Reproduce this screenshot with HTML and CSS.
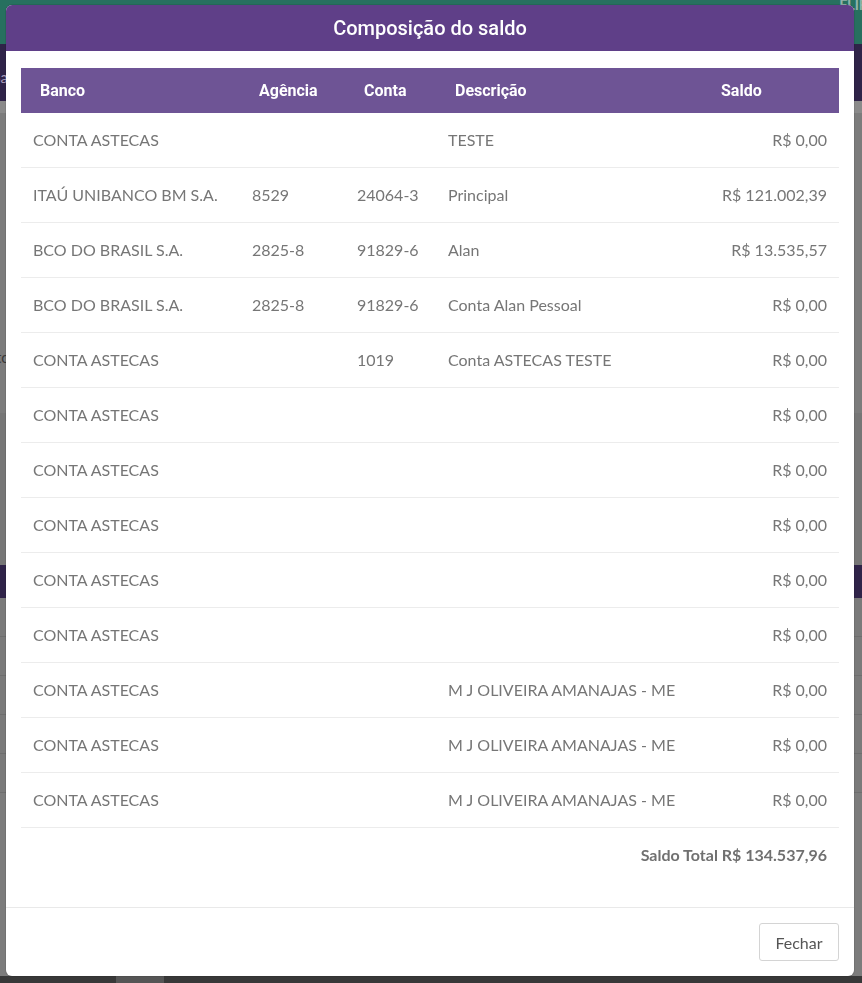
FILE: index.html
```html
<!DOCTYPE html>
<html lang="pt-BR">
<head>
<meta charset="utf-8">
<title>Composição do saldo</title>
<link rel="stylesheet" href="styles.css">
</head>
<body>
<div class="page">
  <div class="topbar"><span class="brand">ELIP</span></div>
  <div class="nav"><span class="nav-frag">Ba</span></div>
  <div class="strip"></div>
  <div class="content">
    <div class="block b1"><span class="frag">Pagamento</span></div>
    <div class="block b2"></div>
    <div class="band"></div>
    <div class="rowbg"></div>
    <div class="rowbg"></div>
    <div class="rowbg"></div>
    <div class="rowbg"></div>
    <div class="rowbg"></div>
    <div class="block b3"><span class="frag dark">Saldo e</span></div>
  </div>
  <div class="bottom"><span class="tab"></span></div>
</div>

<div class="overlay">
  <div class="modal">
    <div class="modal-header">Composição do saldo</div>
    <div class="modal-body">
      <table class="grid">
        <colgroup>
          <col class="c-banco"><col class="c-ag"><col class="c-conta"><col class="c-desc"><col class="c-saldo">
        </colgroup>
        <thead>
          <tr><th>Banco</th><th>Agência</th><th>Conta</th><th>Descrição</th><th>Saldo</th></tr>
        </thead>
        <tbody>
          <tr><td>CONTA ASTECAS</td><td></td><td></td><td>TESTE</td><td class="num">R$ 0,00</td></tr>
          <tr><td>ITAÚ UNIBANCO BM S.A.</td><td>8529</td><td>24064-3</td><td>Principal</td><td class="num">R$ 121.002,39</td></tr>
          <tr><td>BCO DO BRASIL S.A.</td><td>2825-8</td><td>91829-6</td><td>Alan</td><td class="num">R$ 13.535,57</td></tr>
          <tr><td>BCO DO BRASIL S.A.</td><td>2825-8</td><td>91829-6</td><td>Conta Alan Pessoal</td><td class="num">R$ 0,00</td></tr>
          <tr><td>CONTA ASTECAS</td><td></td><td>1019</td><td>Conta ASTECAS TESTE</td><td class="num">R$ 0,00</td></tr>
          <tr><td>CONTA ASTECAS</td><td></td><td></td><td></td><td class="num">R$ 0,00</td></tr>
          <tr><td>CONTA ASTECAS</td><td></td><td></td><td></td><td class="num">R$ 0,00</td></tr>
          <tr><td>CONTA ASTECAS</td><td></td><td></td><td></td><td class="num">R$ 0,00</td></tr>
          <tr><td>CONTA ASTECAS</td><td></td><td></td><td></td><td class="num">R$ 0,00</td></tr>
          <tr><td>CONTA ASTECAS</td><td></td><td></td><td></td><td class="num">R$ 0,00</td></tr>
          <tr><td>CONTA ASTECAS</td><td></td><td></td><td>M J OLIVEIRA AMANAJAS - ME</td><td class="num">R$ 0,00</td></tr>
          <tr><td>CONTA ASTECAS</td><td></td><td></td><td>M J OLIVEIRA AMANAJAS - ME</td><td class="num">R$ 0,00</td></tr>
          <tr><td>CONTA ASTECAS</td><td></td><td></td><td>M J OLIVEIRA AMANAJAS - ME</td><td class="num">R$ 0,00</td></tr>
          <tr class="total"><td colspan="5" class="num">Saldo Total R$ 134.537,96</td></tr>
        </tbody>
      </table>
    </div>
    <div class="modal-footer">
      <button class="btn" type="button">Fechar</button>
    </div>
  </div>
</div>
</body>
</html>
```

FILE: styles.css
```css
html, body {
  margin: 0;
  padding: 0;
  height: 100%;
}

body {
  background: #7b7b7b;
  font-family: "Lato", "Liberation Sans", sans-serif;
  overflow: hidden;
}

/* dimmed page behind the modal */
.page {
  height: 983px;
  display: flex;
  flex-direction: column;
}

.topbar {
  height: 44px;
  background: #27705f;
  display: flex;
  justify-content: flex-end;
  align-items: flex-start;
}

.brand {
  font-family: "Roboto", sans-serif;
  font-size: 14px;
  font-weight: 700;
  color: #8fb3aa;
  margin-right: -6px;
  margin-top: -3px;
}

.nav {
  height: 57px;
  background: #2f2348;
  display: flex;
  align-items: center;
}

.nav-frag {
  font-size: 15px;
  color: #a89cb8;
  margin-left: -9px;
  margin-top: 8px;
}

.strip {
  height: 12px;
  background: #8a8a8a;
}

.content {
  flex: 1;
  display: flex;
  flex-direction: column;
}

.block {
  display: flex;
  align-items: center;
}

.b1 {
  height: 300px;
  background: #7c7c7c;
  padding-top: 188px;
  box-sizing: border-box;
}

.b2 {
  height: 152px;
  background: #767676;
}

.frag {
  font-size: 15px;
  color: #3a3a3a;
  margin-left: -64px;
}

.frag.dark {
  color: #24203a;
  font-weight: 700;
  font-size: 17px;
  margin-left: -58px;
}

.band {
  height: 33px;
  background: #2f2348;
}

.rowbg {
  height: 38px;
  background: #7a7a7a;
  border-bottom: 1px solid #6e6e6e;
}

.b3 {
  flex: 1;
  background: #7c7c7c;
  padding-top: 60px;
  align-items: flex-start;
  box-sizing: border-box;
}

.bottom {
  height: 7px;
  background: #383838;
  display: flex;
}

.tab {
  width: 48px;
  margin-left: 116px;
  background: #555;
}

/* modal */
.overlay {
  position: fixed;
  inset: 0;
  padding: 5px 8px 7px 6px;
  box-sizing: border-box;
  display: flex;
}

.modal {
  flex: 1;
  background: #fff;
  border-radius: 6px;
  overflow: hidden;
  display: flex;
  flex-direction: column;
  box-shadow: 0 0 0 1px rgba(0, 0, 0, 0.08);
}

.modal-header {
  height: 46px;
  background: #5f3f88;
  color: #fff;
  font-family: "Roboto", sans-serif;
  font-weight: 500;
  font-size: 20px;
  display: flex;
  align-items: center;
  justify-content: center;
  flex-shrink: 0;
}

.modal-body {
  padding: 17px 15px 23px 15px;
  flex: 1;
}

.grid {
  width: 818px;
  border-collapse: collapse;
  table-layout: fixed;
}

.c-banco { width: 219px; }
.c-ag { width: 105px; }
.c-conta { width: 91px; }
.c-desc { width: 266px; }
.c-saldo { width: 137px; }

.grid th {
  background: #6e5495;
  color: #fff;
  font-family: "Roboto", sans-serif;
  font-weight: 700;
  font-size: 16px;
  text-align: left;
  height: 44px;
  padding: 0 0 1px 19px;
  white-space: nowrap;
}

.grid td {
  height: 53px;
  padding: 0 12px 1px 12px;
  color: #767676;
  font-size: 16px;
  border-bottom: 1px solid #ececec;
  white-space: nowrap;
}

.grid td.num {
  text-align: right;
}

.grid tr.total td {
  border-bottom: none;
  font-weight: 700;
  color: #707070;
  height: 52px;
}

.modal-footer {
  height: 68px;
  border-top: 1px solid #e9e9e9;
  display: flex;
  align-items: center;
  justify-content: flex-end;
  padding-right: 15px;
  flex-shrink: 0;
}

.btn {
  font-family: "Lato", "Liberation Sans", sans-serif;
  font-size: 16px;
  color: #555;
  background: #fff;
  border: 1px solid #d4d4d4;
  border-radius: 3px;
  width: 80px;
  height: 38px;
  padding: 0;
}
```
